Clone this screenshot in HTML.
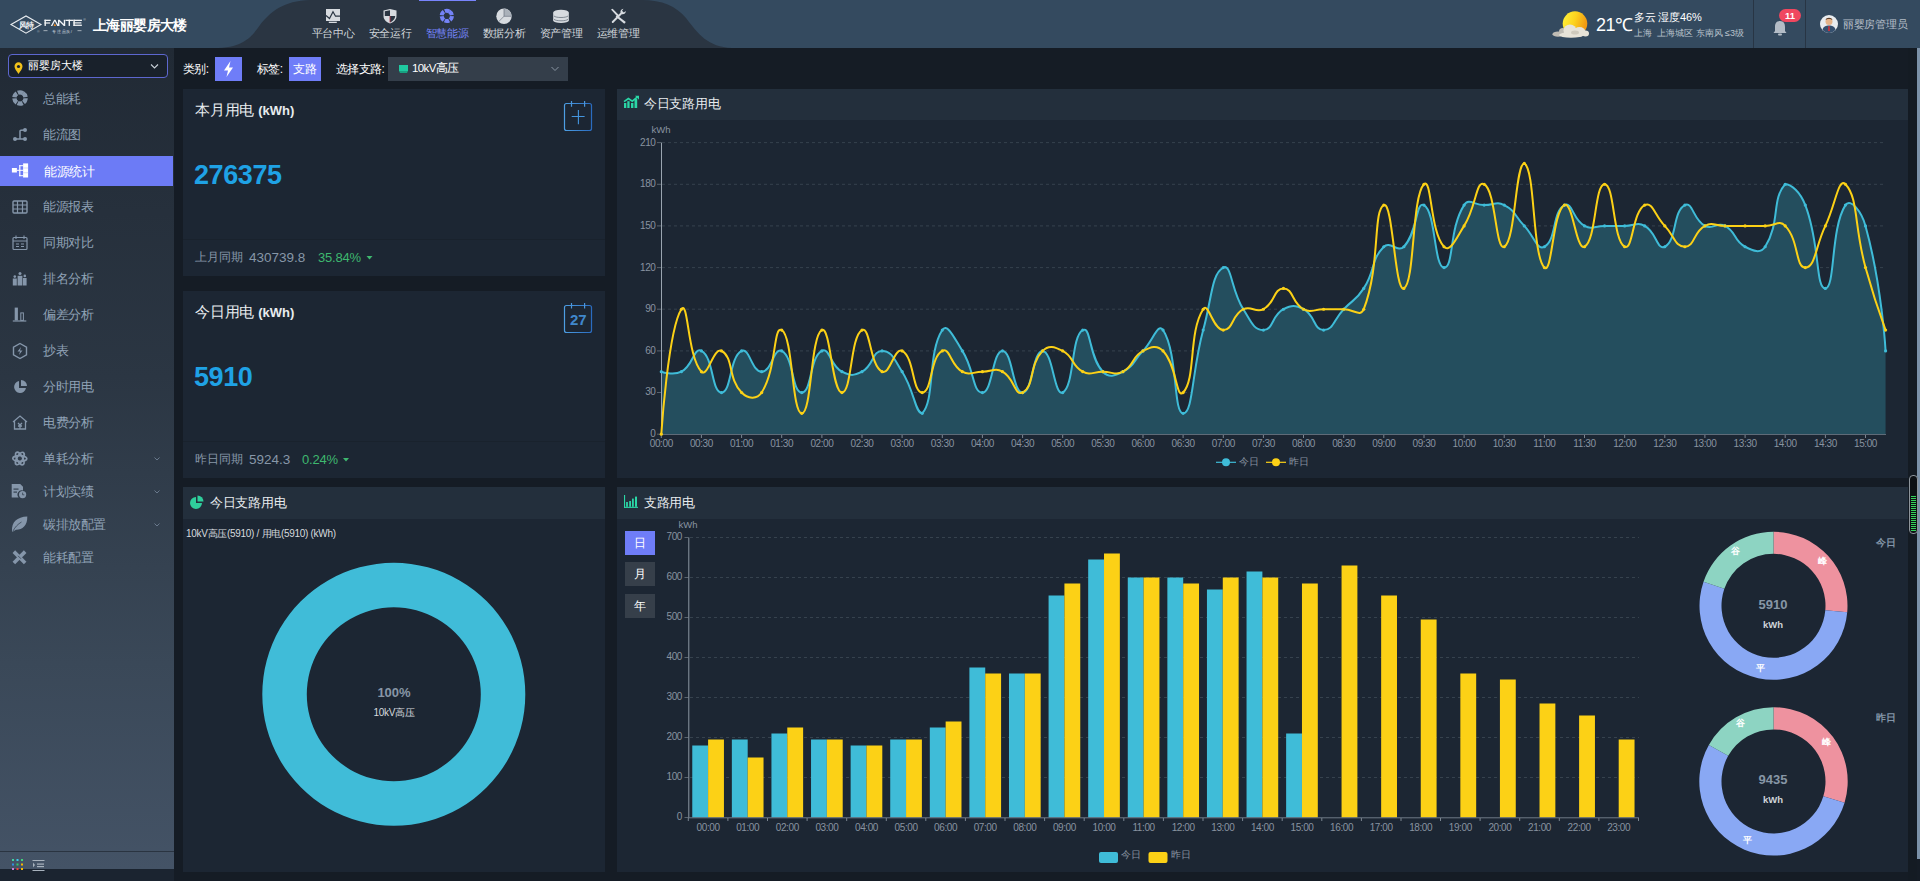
<!DOCTYPE html><html><head><meta charset="utf-8"><title>能源统计</title><style>
*{margin:0;padding:0;box-sizing:border-box}
html,body{width:1920px;height:881px;overflow:hidden;background:#151c25;font-family:"Liberation Sans",sans-serif}
.abs{position:absolute}
.t{position:absolute;white-space:nowrap;line-height:1}
svg{position:absolute;left:0;top:0;overflow:visible}
</style></head><body>
<div class="abs" style="left:0;top:0;width:1920px;height:48px;background:#344a5f"></div>
<svg width="1920" height="48" style="top:0;left:0"><path d="M214 48 C244 48 252 36 260 25 C270 12 284 0.5 310 0 L642 0 C662 0 676 6 686 18 C698 34 708 47 732 48 Z" fill="#2a3542"/></svg>
<svg width="200" height="48">
<path d="M11 24.6 L26 16 L41 24.6 L26 33.2 Z" fill="none" stroke="#e8ecf0" stroke-width="1.1"/>
<text x="26" y="28.3" font-size="7.5" fill="#eef1f4" text-anchor="middle" font-weight="bold" letter-spacing="-0.5">风特</text>
<g fill="#f2f4f6">
<rect x="44.5" y="19.7" width="1.4" height="6.2"/><rect x="44.5" y="19.7" width="6.2" height="1.3"/><rect x="44.5" y="22.4" width="5.6" height="1.2"/>
<path d="M50.8 25.9 L54.2 19.7 L55.4 19.7 L58.8 25.9 L57.3 25.9 L54.8 21.2 L52.3 25.9 Z"/>
<path d="M58 25.9 L58 19.7 L59.5 19.7 L63.8 23.9 L63.8 19.7 L65.2 19.7 L65.2 25.9 L63.8 25.9 L59.4 21.6 L59.4 25.9 Z"/>
<rect x="65.5" y="19.7" width="7.5" height="1.3"/><rect x="68.6" y="19.7" width="1.4" height="6.2"/>
<rect x="73.4" y="19.7" width="1.4" height="6.2"/><rect x="73.4" y="19.7" width="8.5" height="1.3"/><rect x="73.4" y="22.3" width="8" height="1.2"/><rect x="73.4" y="24.6" width="8.5" height="1.3"/>
</g>
<path d="M54.8 23.2 L56 25.9 L53.6 25.9 Z" fill="#f08a1c"/>
<text x="84.6" y="21" font-size="3.5" fill="#c0c8d0" text-anchor="middle">®</text>
<text x="38.4" y="33" font-size="3.5" fill="#aab4be" text-anchor="middle">®</text>
<rect x="43.5" y="30.4" width="4" height="0.7" fill="#d0d6dc"/><rect x="77.5" y="30.4" width="4" height="0.7" fill="#d0d6dc"/>
<text x="62.5" y="33" font-size="4.2" fill="#d8dde2" text-anchor="middle" letter-spacing="0.6">专注品质/</text>
</svg>
<div class="t" style="left:93px;top:18px;font-size:14px;font-weight:bold;color:#fff;letter-spacing:-0.6px">上海丽婴房大楼</div>
<div class="t" style="left:303px;top:28px;width:60px;text-align:center;font-size:11px;color:#d2d7dc;letter-spacing:-0.3px">平台中心</div>
<div class="t" style="left:360px;top:28px;width:60px;text-align:center;font-size:11px;color:#d2d7dc;letter-spacing:-0.3px">安全运行</div>
<div class="t" style="left:417px;top:28px;width:60px;text-align:center;font-size:11px;color:#7483f7;letter-spacing:-0.3px">智慧能源</div>
<div class="t" style="left:474px;top:28px;width:60px;text-align:center;font-size:11px;color:#d2d7dc;letter-spacing:-0.3px">数据分析</div>
<div class="t" style="left:531px;top:28px;width:60px;text-align:center;font-size:11px;color:#d2d7dc;letter-spacing:-0.3px">资产管理</div>
<div class="t" style="left:588px;top:28px;width:60px;text-align:center;font-size:11px;color:#d2d7dc;letter-spacing:-0.3px">运维管理</div>
<div class="abs" style="left:419px;top:0;width:57px;height:1px;background:#7884fc"></div>
<svg width="700" height="48">
<g fill="#d7dbe0">
<rect x="326" y="9" width="14" height="12"/><rect x="328.8" y="21.7" width="8" height="1.3"/>
<polyline points="326,15.5 329.5,18.5 333,11.7 335.5,16.2 340,16.2" fill="none" stroke="#2a3542" stroke-width="1.2"/>
</g>
<g>
<path d="M383.5 10.5 L390 9 L396.5 10.5 L396.5 16 C396.5 20 393 22.5 390 23.6 C387 22.5 383.5 20 383.5 16 Z" fill="#d7dbe0"/>
<path d="M384.8 11.3 L390 10.2 L390 16 L384.8 16 Z" fill="#2a3542"/><path d="M390 16 L395.2 16 C395 19.5 392.5 21.3 390 22.3 Z" fill="#2a3542"/>
<rect x="389.6" y="16" width="0.9" height="6.5" fill="#a03040"/>
</g>
<g transform="translate(446.8,15.9)"><circle r="5.1" fill="none" stroke="#7483f7" stroke-width="4" stroke-dasharray="4.4 0.94" transform="rotate(-60)"/></g>
<g>
<circle cx="504" cy="16.3" r="7.7" fill="#d7dbe0"/>
<path d="M504 16.3 L504 8.6 A7.7 7.7 0 0 1 511.7 16.3 Z" fill="#aab1ba"/>
<path d="M504 8.6 L504 16.3 L511.7 16.3 M504 16.3 L498.6 21.7" stroke="#5d6773" stroke-width="0.6" fill="none"/>
</g>
<g fill="#d7dbe0">
<ellipse cx="561" cy="12.6" rx="7.8" ry="2.8"/>
<rect x="553.2" y="12.6" width="15.6" height="8"/>
<ellipse cx="561" cy="20.4" rx="7.8" ry="2.7"/>
<path d="M554 16 C556 18 566 18 568 16 M554 19.3 C556 21.3 566 21.3 568 19.3" stroke="#6b7580" stroke-width="0.8" fill="none"/>
</g>
<g fill="#d7dbe0">
<path d="M611 9.5 L612.6 8.8 L619 15.3 L617.6 16.7 Z"/>
<path d="M617 15.2 L625.8 22 L624.3 23.8 L615.6 16.6 Z"/>
<path d="M612 21.2 L620.5 12.8 C620 11 621 9 623.5 8.8 L622 10.8 L623.8 12.4 L625.8 11 C625.8 13.5 623.6 14.8 621.8 14.2 L613.4 22.8 C612.6 23.6 611.2 22.2 612 21.2 Z"/>
</g>
</svg>
<svg width="1920" height="48">
<defs><linearGradient id="sung" x1="0" y1="0" x2="1" y2="0.3"><stop offset="0" stop-color="#fff53c"/><stop offset="0.55" stop-color="#fcd21e"/><stop offset="1" stop-color="#f29a12"/></linearGradient></defs>
<circle cx="1575" cy="23.6" r="12.3" fill="url(#sung)"/>
<g fill="#bfbcb4"><ellipse cx="1558" cy="34.2" rx="5.5" ry="2.6"/><ellipse cx="1563" cy="31.5" rx="4" ry="3.5"/></g>
<g fill="#e7e3d8"><ellipse cx="1570" cy="30.5" rx="6.5" ry="6"/><ellipse cx="1579.5" cy="32" rx="6" ry="5"/><ellipse cx="1585.5" cy="33.5" rx="3.5" ry="3"/><ellipse cx="1571" cy="35" rx="12" ry="2.8"/></g>
<ellipse cx="1575" cy="32.5" rx="4" ry="2" fill="#cfcabd"/>
<line x1="1753.5" y1="0" x2="1753.5" y2="48" stroke="#283544" stroke-width="1"/>
<line x1="1805.5" y1="0" x2="1805.5" y2="48" stroke="#283544" stroke-width="1"/>
<path d="M1780 21 C1776 21 1775 24 1775 27 L1775 31 L1773.5 33 L1786.5 33 L1785 31 L1785 27 C1785 24 1784 21 1780 21 Z" fill="#b3bcc6"/>
<rect x="1778" y="33.5" width="4" height="2" rx="1" fill="#b3bcc6"/>
<rect x="1779" y="9" width="22" height="13" rx="6.5" fill="#f0475f"/>
<text x="1790" y="18.8" font-size="9.5" font-weight="bold" fill="#fff" text-anchor="middle" font-family="Liberation Sans">11</text>
<circle cx="1829" cy="24" r="9" fill="#e9ecef"/>
<circle cx="1829" cy="21.5" r="3.5" fill="#e6b48a"/>
<path d="M1822.5 30 C1823 26.5 1826 25.5 1829 25.5 C1832 25.5 1835 26.5 1835.5 30 C1833.5 32 1831 33 1829 33 C1827 33 1824.5 32 1822.5 30 Z" fill="#36506e"/>
<path d="M1828.3 26 L1829.7 26 L1830 31 L1828 31 Z" fill="#c8303a"/>
<path d="M1825.6 20 C1826 17 1832 17 1832.4 20 C1831 18.5 1827 18.5 1825.6 20 Z" fill="#5a3d2a"/>
</svg>
<div class="t" style="left:1596px;top:16px;font-size:18px;color:#fff;letter-spacing:-0.5px">21℃</div>
<div class="t" style="left:1634px;top:12px;font-size:11px;color:#fff;letter-spacing:-0.2px">多云 湿度46%</div>
<div class="t" style="left:1634px;top:29px;font-size:9px;color:#b8c2cc;letter-spacing:0px">上海&nbsp; 上海城区 东南风 ≤3级</div>
<div class="t" style="left:1843px;top:19px;font-size:11px;color:#b4bec8;letter-spacing:-0.3px">丽婴房管理员</div>
<div class="abs" style="left:0;top:48px;width:174px;height:821px;background:linear-gradient(180deg,#212a35 0%,#2b3643 40%,#3a4858 75%,#445366 100%)"></div>
<div class="abs" style="left:0;top:851px;width:174px;height:1px;background:#2a3441"></div>
<div class="abs" style="left:0;top:869px;width:174px;height:12px;background:#1b2430"></div>
<div class="abs" style="left:8px;top:54px;width:160px;height:24px;border:1px solid #5d67cf;border-radius:4px;background:#19212b"></div>
<svg width="180" height="100">
<path d="M18.5 74 C16.5 71 14.5 68.5 14.5 66.5 C14.5 64 16.3 62.3 18.5 62.3 C20.7 62.3 22.5 64 22.5 66.5 C22.5 68.5 20.5 71 18.5 74 Z" fill="#f1c21b"/>
<circle cx="18.5" cy="66.5" r="1.6" fill="#19212b"/>
<path d="M151 64.5 L154.5 68 L158 64.5" fill="none" stroke="#c9d0d8" stroke-width="1.1"/>
</svg>
<div class="t" style="left:28px;top:60px;font-size:11px;color:#fff;letter-spacing:-0.1px">丽婴房大楼</div>
<div class="abs" style="left:0;top:156px;width:173px;height:30px;background:#6c7bf6"></div>
<div class="t" style="left:43px;top:92px;font-size:13px;color:#90a2b6;letter-spacing:-0.5px">总能耗</div>
<div class="t" style="left:43px;top:128px;font-size:13px;color:#90a2b6;letter-spacing:-0.5px">能流图</div>
<div class="t" style="left:44px;top:165px;font-size:13px;color:#ffffff;letter-spacing:-0.5px">能源统计</div>
<div class="t" style="left:43px;top:200px;font-size:13px;color:#90a2b6;letter-spacing:-0.5px">能源报表</div>
<div class="t" style="left:43px;top:236px;font-size:13px;color:#90a2b6;letter-spacing:-0.5px">同期对比</div>
<div class="t" style="left:43px;top:272px;font-size:13px;color:#90a2b6;letter-spacing:-0.5px">排名分析</div>
<div class="t" style="left:43px;top:308px;font-size:13px;color:#90a2b6;letter-spacing:-0.5px">偏差分析</div>
<div class="t" style="left:43px;top:344px;font-size:13px;color:#90a2b6;letter-spacing:-0.5px">抄表</div>
<div class="t" style="left:43px;top:380px;font-size:13px;color:#90a2b6;letter-spacing:-0.5px">分时用电</div>
<div class="t" style="left:43px;top:416px;font-size:13px;color:#90a2b6;letter-spacing:-0.5px">电费分析</div>
<div class="t" style="left:43px;top:452px;font-size:13px;color:#90a2b6;letter-spacing:-0.5px">单耗分析</div>
<div class="t" style="left:43px;top:485px;font-size:13px;color:#90a2b6;letter-spacing:-0.5px">计划实绩</div>
<div class="t" style="left:43px;top:518px;font-size:13px;color:#90a2b6;letter-spacing:-0.5px">碳排放配置</div>
<div class="t" style="left:43px;top:551px;font-size:13px;color:#90a2b6;letter-spacing:-0.5px">能耗配置</div>
<svg width="180" height="881"><path d="M154.5 457.5 L157 460.0 L159.5 457.5" fill="none" stroke="#6f8094" stroke-width="0.9"/></svg>
<svg width="180" height="881"><path d="M154.5 490.5 L157 493.0 L159.5 490.5" fill="none" stroke="#6f8094" stroke-width="0.9"/></svg>
<svg width="180" height="881"><path d="M154.5 523.5 L157 526.0 L159.5 523.5" fill="none" stroke="#6f8094" stroke-width="0.9"/></svg>
<svg width="180" height="881"><g fill="#8596aa">
<g transform="translate(20,98)"><circle r="5.6" fill="none" stroke="#8596aa" stroke-width="4.4" stroke-dasharray="4.85 1.015" transform="rotate(-60)"/></g>
<g transform="translate(20,135)"><circle cx="-5" cy="4" r="2"/><circle cx="5" cy="4" r="2"/><circle cx="5" cy="-5" r="2"/><path d="M-5 4 L5 4 M0 4 L0 -4 C0 -5 1 -5 5 -5" stroke="#8596aa" stroke-width="1.5" fill="none"/></g>
<g fill="#fff"><rect x="11.9" y="168" width="5" height="4.5"/><rect x="16.9" y="169.8" width="2.5" height="1"/><rect x="19.2" y="165.2" width="1.2" height="11"/><rect x="19.2" y="165.2" width="4" height="1"/><rect x="19.2" y="169.8" width="4" height="1"/><rect x="19.2" y="175.2" width="4" height="1"/><rect x="23.1" y="163.4" width="5" height="14.1"/><rect x="23.1" y="167.6" width="5" height="0.8" fill="#c9cdf6"/><rect x="23.1" y="172.4" width="5" height="0.8" fill="#c9cdf6"/></g>
<g transform="translate(20,207)"><rect x="-7" y="-6" width="14" height="12" rx="1" fill="none" stroke="#8596aa" stroke-width="1.4"/><path d="M-7 -2 L7 -2 M-7 2 L7 2 M-2.5 -6 L-2.5 6 M2.5 -6 L2.5 6" stroke="#8596aa" stroke-width="1.2"/></g>
<g transform="translate(20,243)"><rect x="-7" y="-5.5" width="14" height="12" rx="1" fill="none" stroke="#8596aa" stroke-width="1.2"/><path d="M-7 -2 L7 -2 M-4 -7.5 L-4 -4 M4 -7.5 L4 -4 M-4 1 L-1 1 M1 1 L4 1 M-4 3.5 L-1 3.5 M1 3.5 L4 3.5" stroke="#8596aa" stroke-width="1.1"/></g>
<g><rect x="12.8" y="278.5" width="4" height="7"/><circle cx="14.8" cy="276.6" r="1.3"/><rect x="17.6" y="275.8" width="4.8" height="9.7"/><circle cx="20" cy="273.6" r="1.5"/><rect x="23" y="278" width="3.6" height="7.5"/><circle cx="24.8" cy="275.9" r="1.3"/></g>
<g><rect x="14.7" y="307.6" width="3.2" height="12.8"/><rect x="20.8" y="312.9" width="2.6" height="7.5" fill="none" stroke="#8596aa" stroke-width="1"/><rect x="12.8" y="320.4" width="13.5" height="1.2"/></g>
<g transform="translate(20,351)"><path d="M0 -7.5 L6.5 -3.75 L6.5 3.75 L0 7.5 L-6.5 3.75 L-6.5 -3.75 Z" fill="none" stroke="#8596aa" stroke-width="1.4"/><path d="M1 -4 L-2.5 0.5 L0 0.5 L-1 4 L2.5 -0.5 L0 -0.5 Z"/></g>
<g transform="translate(20,387)"><path d="M-1 -6 A6 6 0 1 0 6 1 L-1 1 Z"/><path d="M1 -7 A6 6 0 0 1 7 -1 L1 -1 Z"/></g>
<g transform="translate(20,423)" fill="none" stroke="#8596aa" stroke-width="1.3"><path d="M-7 -1 L0 -7 L7 -1 M-5.5 -2 L-5.5 6 L5.5 6 L5.5 -2"/><path d="M-2 0 L0 2 L2 0 M0 2 L0 6 M-2 3 L2 3"/></g>
<g transform="translate(19.8,458.5)" fill="none" stroke="#8596aa" stroke-width="1.7"><ellipse rx="7" ry="2.9"/><ellipse rx="7" ry="2.9" transform="rotate(60)"/><ellipse rx="7" ry="2.9" transform="rotate(120)"/></g>
<g><path d="M11.7 484 L20.2 484 L23 486.8 L23 490.5 A4.3 4.3 0 0 0 18.6 497.5 L11.7 497.5 Z"/><rect x="13.5" y="488.5" width="5" height="1.2" fill="#34414f"/><rect x="13.5" y="491.5" width="3.5" height="1.2" fill="#34414f"/><circle cx="22.6" cy="494.6" r="3.6"/><path d="M22.6 492.6 L22.6 494.8 L24.3 494.8" stroke="#34414f" stroke-width="0.8" fill="none"/></g>
<g><path d="M12 531.5 C11.5 522 17 517 27.3 516.6 C27.5 526 22 530 16 529.8 L13 531.5 Z"/><path d="M13 531 C15 527 18 524 21.5 522" stroke="#384655" stroke-width="0.8" fill="none"/></g>
<g transform="translate(19.5,557.3)"><rect x="-8" y="-1.8" width="16" height="3.6" transform="rotate(45)"/><rect x="-8" y="-1.8" width="16" height="3.6" transform="rotate(-45)"/><path d="M-1.5 -1.5 L1.5 1.5" stroke="#394758" stroke-width="0.8"/></g>
</g></svg>
<svg width="180" height="881">
<rect x="12" y="859" width="2" height="2" fill="#3fd3a0"/><rect x="16.5" y="859" width="2" height="2" fill="#3fc8e8"/><rect x="21" y="859" width="2" height="2" fill="#3fd37a"/>
<rect x="12" y="863.5" width="2" height="2" fill="#2f8fe0"/><rect x="16.5" y="863.5" width="2" height="2" fill="#2fce6a"/><rect x="21" y="863.5" width="2" height="2" fill="#f5b800"/>
<rect x="12" y="868" width="2" height="2" fill="#c77ddb"/><rect x="16.5" y="868" width="2" height="2" fill="#f0443a"/><rect x="21" y="868" width="2" height="2" fill="#f5b800"/>
<rect x="32.5" y="860" width="12" height="1" fill="#a8b2bd"/><rect x="37" y="863.5" width="7" height="1.2" fill="#a8b2bd"/><rect x="37" y="866" width="7" height="1.2" fill="#a8b2bd"/><path d="M33 862.5 L35 865 L33 867.5 Z" fill="#a8b2bd"/><rect x="32.5" y="870" width="12" height="1" fill="#a8b2bd"/>
</svg>
<div class="t" style="left:183px;top:63px;font-size:12px;color:#fff;letter-spacing:-0.6px">类别:</div>
<div class="abs" style="left:215px;top:57px;width:27px;height:24px;background:#6f7df8"></div>
<svg width="300" height="100"><path d="M230.5 61 L224 70.5 L228 70.5 L226.5 77 L233 67.5 L229 67.5 Z" fill="#fff"/></svg>
<div class="t" style="left:257px;top:63px;font-size:12px;color:#fff;letter-spacing:-0.6px">标签:</div>
<div class="abs" style="left:289px;top:57px;width:32px;height:24px;background:#6f7df8"></div>
<div class="t" style="left:293px;top:63px;font-size:12px;color:#fff;letter-spacing:-0.5px">支路</div>
<div class="t" style="left:336px;top:63px;font-size:12px;color:#fff;letter-spacing:-0.6px">选择支路:</div>
<div class="abs" style="left:388px;top:57px;width:180px;height:24px;background:#343e4a"></div>
<svg width="600" height="100"><path d="M399 65 L408 65 L408 71 L399 71 Z" fill="#1fc9a0"/><path d="M399 71 L408 71 L407 73 L400 73 Z" fill="#18a080"/><path d="M551.5 67 L555 70.5 L558.5 67" fill="none" stroke="#8a96a3" stroke-width="1"/></svg>
<div class="t" style="left:412px;top:63px;font-size:11.5px;color:#fff;letter-spacing:-0.6px">10kV高压</div>
<div class="abs" style="left:183px;top:89px;width:422px;height:187px;background:#1c2633"></div>
<div class="abs" style="left:183px;top:291px;width:422px;height:187px;background:#1c2633"></div>
<div class="abs" style="left:183px;top:487px;width:422px;height:385px;background:#1c2633"></div>
<div class="abs" style="left:617px;top:89px;width:1291px;height:389px;background:#1c2633"></div>
<div class="abs" style="left:617px;top:487px;width:1291px;height:385px;background:#1c2633"></div>
<div class="abs" style="left:183px;top:487px;width:422px;height:32px;background:#232f3c"></div>
<div class="abs" style="left:617px;top:89px;width:1291px;height:31px;background:#232f3c"></div>
<div class="abs" style="left:617px;top:487px;width:1291px;height:32px;background:#232f3c"></div>
<div class="abs" style="left:183px;top:239px;width:422px;height:1px;background:#19222d"></div>
<div class="abs" style="left:183px;top:441px;width:422px;height:1px;background:#19222d"></div>
<div class="t" style="left:195px;top:102px;font-size:15px;color:#e8ecef;letter-spacing:-0.2px">本月用电 <b style="font-size:13px;letter-spacing:0">(kWh)</b></div>
<div class="t" style="left:194px;top:162px;font-size:27px;color:#1fa2e5;font-weight:bold;letter-spacing:-0.4px">276375</div>
<div class="t" style="left:195px;top:251px;font-size:12px;color:#8797a8;letter-spacing:-0.1px">上月同期</div>
<div class="t" style="left:249px;top:251px;font-size:13.5px;color:#8797a8;letter-spacing:0px">430739.8</div>
<div class="t" style="left:318px;top:251px;font-size:13px;color:#3eb86f;letter-spacing:-0.2px">35.84%</div>
<div class="t" style="left:195px;top:304px;font-size:15px;color:#e8ecef;letter-spacing:-0.2px">今日用电 <b style="font-size:13px;letter-spacing:0">(kWh)</b></div>
<div class="t" style="left:194px;top:364px;font-size:27px;color:#1fa2e5;font-weight:bold;letter-spacing:-0.4px">5910</div>
<div class="t" style="left:195px;top:453px;font-size:12px;color:#8797a8;letter-spacing:-0.1px">昨日同期</div>
<div class="t" style="left:249px;top:453px;font-size:13.5px;color:#8797a8;letter-spacing:0px">5924.3</div>
<div class="t" style="left:302px;top:453px;font-size:13px;color:#3eb86f;letter-spacing:-0.2px">0.24%</div>
<svg width="700" height="500">
<path d="M366.5 256 L372.5 256 L369.5 259.5 Z" fill="#3eb86f"/>
<path d="M343 458 L349 458 L346 461.5 Z" fill="#3eb86f"/>
<defs><linearGradient id="calg" x1="0" y1="0" x2="1" y2="0"><stop offset="0" stop-color="#4d9ee3"/><stop offset="1" stop-color="#2a6cc0"/></linearGradient></defs>
<rect x="564.5" y="103.5" width="27" height="27" rx="2" fill="none" stroke="url(#calg)" stroke-width="1.2"/>
<path d="M571.5 101 L571.5 106.8 M584.6 101 L584.6 106.8" stroke="#4a96dc" stroke-width="1.2"/>
<path d="M578.4 110 L578.4 124.2 M571.7 116.5 L584.6 116.5" stroke="#4496df" stroke-width="1.1"/>
<rect x="564.5" y="305.5" width="27" height="27" rx="2" fill="none" stroke="url(#calg)" stroke-width="1.2"/>
<path d="M571.5 303 L571.5 308.6 M584.6 303 L584.6 308.6" stroke="#4a96dc" stroke-width="1.2"/>
<text x="578.3" y="325" font-size="15" font-weight="bold" fill="#4088cc" text-anchor="middle" font-family="Liberation Sans">27</text>
</svg>
<div class="t" style="left:644px;top:98px;font-size:12.5px;color:#e8ecef;letter-spacing:-0.3px">今日支路用电</div>
<div class="t" style="left:210px;top:497px;font-size:12.5px;color:#e8ecef;letter-spacing:-0.3px">今日支路用电</div>
<div class="t" style="left:644px;top:497px;font-size:12.5px;color:#e8ecef;letter-spacing:-0.3px">支路用电</div>
<svg width="700" height="600">
<g fill="#2bd6a6"><rect x="624" y="103" width="2.3" height="5"/><rect x="627.3" y="101.2" width="2.3" height="6.8"/><rect x="631" y="103" width="2.4" height="5"/><rect x="634.5" y="99" width="2.7" height="9"/><polyline points="624,101.6 628.4,98.6 632.3,101.1 637.2,97.2" fill="none" stroke="#2bd6a6" stroke-width="1.7"/><path d="M635 95.8 L639 95.8 L639 99.8 Z"/></g>
<g fill="#2fcf9c"><path d="M196 497 A6 6 0 1 0 202 503 L196 503 Z"/><path d="M197.5 495.5 A6 6 0 0 1 203.5 501.5 L197.5 501.5 Z"/></g>
<g fill="#2bd6a6"><rect x="624" y="495" width="1.1" height="12.8"/><rect x="624" y="506.8" width="14" height="1.1"/><rect x="626.1" y="502" width="1.8" height="4.8"/><rect x="629.2" y="501" width="1.8" height="5.8"/><rect x="632" y="498.6" width="1.8" height="8.2"/><rect x="635" y="496.6" width="2" height="10.2"/></g>
</svg>
<svg width="1920" height="881"><line x1="662" y1="392.5" x2="1886" y2="392.5" stroke="#36424e" stroke-width="1" stroke-dasharray="3 3"/><line x1="662" y1="350.9" x2="1886" y2="350.9" stroke="#36424e" stroke-width="1" stroke-dasharray="3 3"/><line x1="662" y1="309.2" x2="1886" y2="309.2" stroke="#36424e" stroke-width="1" stroke-dasharray="3 3"/><line x1="662" y1="267.6" x2="1886" y2="267.6" stroke="#36424e" stroke-width="1" stroke-dasharray="3 3"/><line x1="662" y1="225.9" x2="1886" y2="225.9" stroke="#36424e" stroke-width="1" stroke-dasharray="3 3"/><line x1="662" y1="184.3" x2="1886" y2="184.3" stroke="#36424e" stroke-width="1" stroke-dasharray="3 3"/><line x1="662" y1="142.6" x2="1886" y2="142.6" stroke="#36424e" stroke-width="1" stroke-dasharray="3 3"/><line x1="657" y1="434.2" x2="661" y2="434.2" stroke="#59636e" stroke-width="1"/><text x="655.5" y="437.1" font-size="10" fill="#8893a0" text-anchor="end" letter-spacing="-0.4" font-family="Liberation Sans">0</text><line x1="657" y1="392.5" x2="661" y2="392.5" stroke="#59636e" stroke-width="1"/><text x="655.5" y="395.4" font-size="10" fill="#8893a0" text-anchor="end" letter-spacing="-0.4" font-family="Liberation Sans">30</text><line x1="657" y1="350.9" x2="661" y2="350.9" stroke="#59636e" stroke-width="1"/><text x="655.5" y="353.8" font-size="10" fill="#8893a0" text-anchor="end" letter-spacing="-0.4" font-family="Liberation Sans">60</text><line x1="657" y1="309.2" x2="661" y2="309.2" stroke="#59636e" stroke-width="1"/><text x="655.5" y="312.1" font-size="10" fill="#8893a0" text-anchor="end" letter-spacing="-0.4" font-family="Liberation Sans">90</text><line x1="657" y1="267.6" x2="661" y2="267.6" stroke="#59636e" stroke-width="1"/><text x="655.5" y="270.5" font-size="10" fill="#8893a0" text-anchor="end" letter-spacing="-0.4" font-family="Liberation Sans">120</text><line x1="657" y1="225.9" x2="661" y2="225.9" stroke="#59636e" stroke-width="1"/><text x="655.5" y="228.8" font-size="10" fill="#8893a0" text-anchor="end" letter-spacing="-0.4" font-family="Liberation Sans">150</text><line x1="657" y1="184.3" x2="661" y2="184.3" stroke="#59636e" stroke-width="1"/><text x="655.5" y="187.2" font-size="10" fill="#8893a0" text-anchor="end" letter-spacing="-0.4" font-family="Liberation Sans">180</text><line x1="657" y1="142.6" x2="661" y2="142.6" stroke="#59636e" stroke-width="1"/><text x="655.5" y="145.5" font-size="10" fill="#8893a0" text-anchor="end" letter-spacing="-0.4" font-family="Liberation Sans">210</text><text x="661" y="132.5" font-size="9.5" fill="#8893a0" text-anchor="middle" font-family="Liberation Sans">kWh</text><path d="M661.30 371.71 C661.30 371.71 673.15 375.98 681.37 371.71 C693.22 365.57 693.72 346.88 701.44 350.89 C713.79 357.29 711.48 392.54 721.51 392.54 C731.54 392.54 729.23 357.29 741.58 350.89 C749.30 346.88 751.62 371.71 761.65 371.71 C771.68 371.71 774.00 346.88 781.72 350.89 C794.07 357.29 791.75 392.54 801.79 392.54 C811.82 392.54 809.51 357.29 821.86 350.89 C829.58 346.88 830.08 365.57 841.93 371.71 C850.15 375.98 853.78 375.98 862.00 371.71 C873.85 365.57 872.03 350.89 882.07 350.89 C892.10 350.89 894.42 359.69 902.14 371.71 C914.49 390.93 915.18 413.37 922.21 413.37 C935.25 399.84 927.27 353.42 942.28 330.06 C947.34 322.17 954.63 338.86 962.35 350.89 C974.70 370.11 972.38 392.54 982.42 392.54 C992.45 392.54 992.46 350.89 1002.49 350.89 C1012.52 350.89 1012.52 392.54 1022.56 392.54 C1032.59 392.54 1032.59 350.89 1042.63 350.89 C1052.66 350.89 1054.40 396.85 1062.70 392.54 C1074.47 386.43 1071.00 336.17 1082.77 330.06 C1091.07 325.75 1088.84 357.19 1102.84 371.71 C1108.91 378.02 1114.69 375.98 1122.91 371.71 C1134.76 365.57 1132.94 361.30 1142.98 350.89 C1153.02 340.47 1157.99 322.17 1163.05 330.06 C1178.06 353.42 1173.08 413.37 1183.12 413.37 C1193.15 413.37 1191.82 371.34 1203.19 330.06 C1211.89 298.44 1211.49 273.68 1223.26 267.57 C1231.56 263.27 1230.98 290.01 1243.33 309.23 C1251.05 321.25 1253.37 330.06 1263.40 330.06 C1273.43 330.06 1271.62 315.38 1283.47 309.23 C1291.69 304.96 1295.32 304.96 1303.54 309.23 C1315.39 315.38 1313.58 330.06 1323.61 330.06 C1333.64 330.06 1333.64 319.64 1343.68 309.23 C1353.71 298.81 1356.03 300.42 1363.75 288.40 C1376.10 269.18 1369.82 261.27 1383.82 246.74 C1389.89 240.44 1397.82 253.05 1403.89 246.74 C1417.89 232.22 1415.66 200.78 1423.96 205.09 C1435.73 211.20 1433.99 267.57 1444.03 267.57 C1454.07 267.57 1448.73 229.01 1464.10 205.09 C1468.80 197.77 1474.13 205.09 1484.17 205.09 C1494.20 205.09 1496.02 200.82 1504.24 205.09 C1516.09 211.23 1514.27 215.50 1524.31 225.91 C1534.35 236.33 1536.66 250.75 1544.38 246.74 C1556.73 240.34 1552.10 211.49 1564.45 205.09 C1572.17 201.08 1572.67 219.77 1584.52 225.91 C1592.74 230.18 1594.55 225.91 1604.59 225.91 C1614.62 225.91 1614.62 225.91 1624.66 225.91 C1634.69 225.91 1636.51 221.65 1644.73 225.91 C1656.58 232.06 1657.08 250.75 1664.80 246.74 C1677.15 240.34 1672.52 211.49 1684.87 205.09 C1692.59 201.08 1693.09 219.77 1704.94 225.91 C1713.16 230.18 1716.79 221.65 1725.01 225.91 C1736.86 232.06 1733.23 240.59 1745.08 246.74 C1753.30 251.01 1760.45 254.06 1765.15 246.74 C1780.52 222.82 1771.29 198.71 1785.22 184.26 C1791.36 184.26 1800.23 191.95 1805.29 205.09 C1820.30 244.02 1815.32 288.40 1825.36 288.40 C1835.39 288.40 1830.42 228.44 1845.43 205.09 C1850.49 197.20 1861.77 212.35 1865.50 225.91 C1881.84 285.25 1885.57 350.89 1885.57 350.89 L1885.57 434.20 L661.30 434.20 Z" fill="#244e5e"/><line x1="661.5" y1="142.6" x2="661.5" y2="434.2" stroke="#9aa5b0" stroke-width="1"/><line x1="661" y1="434.5" x2="1886" y2="434.5" stroke="#5f6b78" stroke-width="1"/><line x1="661.3" y1="435" x2="661.3" y2="438" stroke="#7a8591" stroke-width="1"/><text x="661.3" y="447" font-size="10" letter-spacing="-0.4" fill="#8893a0" text-anchor="middle" font-family="Liberation Sans">00:00</text><line x1="701.4" y1="435" x2="701.4" y2="438" stroke="#7a8591" stroke-width="1"/><text x="701.4" y="447" font-size="10" letter-spacing="-0.4" fill="#8893a0" text-anchor="middle" font-family="Liberation Sans">00:30</text><line x1="741.6" y1="435" x2="741.6" y2="438" stroke="#7a8591" stroke-width="1"/><text x="741.6" y="447" font-size="10" letter-spacing="-0.4" fill="#8893a0" text-anchor="middle" font-family="Liberation Sans">01:00</text><line x1="781.7" y1="435" x2="781.7" y2="438" stroke="#7a8591" stroke-width="1"/><text x="781.7" y="447" font-size="10" letter-spacing="-0.4" fill="#8893a0" text-anchor="middle" font-family="Liberation Sans">01:30</text><line x1="821.9" y1="435" x2="821.9" y2="438" stroke="#7a8591" stroke-width="1"/><text x="821.9" y="447" font-size="10" letter-spacing="-0.4" fill="#8893a0" text-anchor="middle" font-family="Liberation Sans">02:00</text><line x1="862.0" y1="435" x2="862.0" y2="438" stroke="#7a8591" stroke-width="1"/><text x="862.0" y="447" font-size="10" letter-spacing="-0.4" fill="#8893a0" text-anchor="middle" font-family="Liberation Sans">02:30</text><line x1="902.1" y1="435" x2="902.1" y2="438" stroke="#7a8591" stroke-width="1"/><text x="902.1" y="447" font-size="10" letter-spacing="-0.4" fill="#8893a0" text-anchor="middle" font-family="Liberation Sans">03:00</text><line x1="942.3" y1="435" x2="942.3" y2="438" stroke="#7a8591" stroke-width="1"/><text x="942.3" y="447" font-size="10" letter-spacing="-0.4" fill="#8893a0" text-anchor="middle" font-family="Liberation Sans">03:30</text><line x1="982.4" y1="435" x2="982.4" y2="438" stroke="#7a8591" stroke-width="1"/><text x="982.4" y="447" font-size="10" letter-spacing="-0.4" fill="#8893a0" text-anchor="middle" font-family="Liberation Sans">04:00</text><line x1="1022.6" y1="435" x2="1022.6" y2="438" stroke="#7a8591" stroke-width="1"/><text x="1022.6" y="447" font-size="10" letter-spacing="-0.4" fill="#8893a0" text-anchor="middle" font-family="Liberation Sans">04:30</text><line x1="1062.7" y1="435" x2="1062.7" y2="438" stroke="#7a8591" stroke-width="1"/><text x="1062.7" y="447" font-size="10" letter-spacing="-0.4" fill="#8893a0" text-anchor="middle" font-family="Liberation Sans">05:00</text><line x1="1102.8" y1="435" x2="1102.8" y2="438" stroke="#7a8591" stroke-width="1"/><text x="1102.8" y="447" font-size="10" letter-spacing="-0.4" fill="#8893a0" text-anchor="middle" font-family="Liberation Sans">05:30</text><line x1="1143.0" y1="435" x2="1143.0" y2="438" stroke="#7a8591" stroke-width="1"/><text x="1143.0" y="447" font-size="10" letter-spacing="-0.4" fill="#8893a0" text-anchor="middle" font-family="Liberation Sans">06:00</text><line x1="1183.1" y1="435" x2="1183.1" y2="438" stroke="#7a8591" stroke-width="1"/><text x="1183.1" y="447" font-size="10" letter-spacing="-0.4" fill="#8893a0" text-anchor="middle" font-family="Liberation Sans">06:30</text><line x1="1223.3" y1="435" x2="1223.3" y2="438" stroke="#7a8591" stroke-width="1"/><text x="1223.3" y="447" font-size="10" letter-spacing="-0.4" fill="#8893a0" text-anchor="middle" font-family="Liberation Sans">07:00</text><line x1="1263.4" y1="435" x2="1263.4" y2="438" stroke="#7a8591" stroke-width="1"/><text x="1263.4" y="447" font-size="10" letter-spacing="-0.4" fill="#8893a0" text-anchor="middle" font-family="Liberation Sans">07:30</text><line x1="1303.5" y1="435" x2="1303.5" y2="438" stroke="#7a8591" stroke-width="1"/><text x="1303.5" y="447" font-size="10" letter-spacing="-0.4" fill="#8893a0" text-anchor="middle" font-family="Liberation Sans">08:00</text><line x1="1343.7" y1="435" x2="1343.7" y2="438" stroke="#7a8591" stroke-width="1"/><text x="1343.7" y="447" font-size="10" letter-spacing="-0.4" fill="#8893a0" text-anchor="middle" font-family="Liberation Sans">08:30</text><line x1="1383.8" y1="435" x2="1383.8" y2="438" stroke="#7a8591" stroke-width="1"/><text x="1383.8" y="447" font-size="10" letter-spacing="-0.4" fill="#8893a0" text-anchor="middle" font-family="Liberation Sans">09:00</text><line x1="1424.0" y1="435" x2="1424.0" y2="438" stroke="#7a8591" stroke-width="1"/><text x="1424.0" y="447" font-size="10" letter-spacing="-0.4" fill="#8893a0" text-anchor="middle" font-family="Liberation Sans">09:30</text><line x1="1464.1" y1="435" x2="1464.1" y2="438" stroke="#7a8591" stroke-width="1"/><text x="1464.1" y="447" font-size="10" letter-spacing="-0.4" fill="#8893a0" text-anchor="middle" font-family="Liberation Sans">10:00</text><line x1="1504.2" y1="435" x2="1504.2" y2="438" stroke="#7a8591" stroke-width="1"/><text x="1504.2" y="447" font-size="10" letter-spacing="-0.4" fill="#8893a0" text-anchor="middle" font-family="Liberation Sans">10:30</text><line x1="1544.4" y1="435" x2="1544.4" y2="438" stroke="#7a8591" stroke-width="1"/><text x="1544.4" y="447" font-size="10" letter-spacing="-0.4" fill="#8893a0" text-anchor="middle" font-family="Liberation Sans">11:00</text><line x1="1584.5" y1="435" x2="1584.5" y2="438" stroke="#7a8591" stroke-width="1"/><text x="1584.5" y="447" font-size="10" letter-spacing="-0.4" fill="#8893a0" text-anchor="middle" font-family="Liberation Sans">11:30</text><line x1="1624.7" y1="435" x2="1624.7" y2="438" stroke="#7a8591" stroke-width="1"/><text x="1624.7" y="447" font-size="10" letter-spacing="-0.4" fill="#8893a0" text-anchor="middle" font-family="Liberation Sans">12:00</text><line x1="1664.8" y1="435" x2="1664.8" y2="438" stroke="#7a8591" stroke-width="1"/><text x="1664.8" y="447" font-size="10" letter-spacing="-0.4" fill="#8893a0" text-anchor="middle" font-family="Liberation Sans">12:30</text><line x1="1704.9" y1="435" x2="1704.9" y2="438" stroke="#7a8591" stroke-width="1"/><text x="1704.9" y="447" font-size="10" letter-spacing="-0.4" fill="#8893a0" text-anchor="middle" font-family="Liberation Sans">13:00</text><line x1="1745.1" y1="435" x2="1745.1" y2="438" stroke="#7a8591" stroke-width="1"/><text x="1745.1" y="447" font-size="10" letter-spacing="-0.4" fill="#8893a0" text-anchor="middle" font-family="Liberation Sans">13:30</text><line x1="1785.2" y1="435" x2="1785.2" y2="438" stroke="#7a8591" stroke-width="1"/><text x="1785.2" y="447" font-size="10" letter-spacing="-0.4" fill="#8893a0" text-anchor="middle" font-family="Liberation Sans">14:00</text><line x1="1825.4" y1="435" x2="1825.4" y2="438" stroke="#7a8591" stroke-width="1"/><text x="1825.4" y="447" font-size="10" letter-spacing="-0.4" fill="#8893a0" text-anchor="middle" font-family="Liberation Sans">14:30</text><line x1="1865.5" y1="435" x2="1865.5" y2="438" stroke="#7a8591" stroke-width="1"/><text x="1865.5" y="447" font-size="10" letter-spacing="-0.4" fill="#8893a0" text-anchor="middle" font-family="Liberation Sans">15:00</text><path d="M661.30 371.71 C661.30 371.71 673.15 375.98 681.37 371.71 C693.22 365.57 693.72 346.88 701.44 350.89 C713.79 357.29 711.48 392.54 721.51 392.54 C731.54 392.54 729.23 357.29 741.58 350.89 C749.30 346.88 751.62 371.71 761.65 371.71 C771.68 371.71 774.00 346.88 781.72 350.89 C794.07 357.29 791.75 392.54 801.79 392.54 C811.82 392.54 809.51 357.29 821.86 350.89 C829.58 346.88 830.08 365.57 841.93 371.71 C850.15 375.98 853.78 375.98 862.00 371.71 C873.85 365.57 872.03 350.89 882.07 350.89 C892.10 350.89 894.42 359.69 902.14 371.71 C914.49 390.93 915.18 413.37 922.21 413.37 C935.25 399.84 927.27 353.42 942.28 330.06 C947.34 322.17 954.63 338.86 962.35 350.89 C974.70 370.11 972.38 392.54 982.42 392.54 C992.45 392.54 992.46 350.89 1002.49 350.89 C1012.52 350.89 1012.52 392.54 1022.56 392.54 C1032.59 392.54 1032.59 350.89 1042.63 350.89 C1052.66 350.89 1054.40 396.85 1062.70 392.54 C1074.47 386.43 1071.00 336.17 1082.77 330.06 C1091.07 325.75 1088.84 357.19 1102.84 371.71 C1108.91 378.02 1114.69 375.98 1122.91 371.71 C1134.76 365.57 1132.94 361.30 1142.98 350.89 C1153.02 340.47 1157.99 322.17 1163.05 330.06 C1178.06 353.42 1173.08 413.37 1183.12 413.37 C1193.15 413.37 1191.82 371.34 1203.19 330.06 C1211.89 298.44 1211.49 273.68 1223.26 267.57 C1231.56 263.27 1230.98 290.01 1243.33 309.23 C1251.05 321.25 1253.37 330.06 1263.40 330.06 C1273.43 330.06 1271.62 315.38 1283.47 309.23 C1291.69 304.96 1295.32 304.96 1303.54 309.23 C1315.39 315.38 1313.58 330.06 1323.61 330.06 C1333.64 330.06 1333.64 319.64 1343.68 309.23 C1353.71 298.81 1356.03 300.42 1363.75 288.40 C1376.10 269.18 1369.82 261.27 1383.82 246.74 C1389.89 240.44 1397.82 253.05 1403.89 246.74 C1417.89 232.22 1415.66 200.78 1423.96 205.09 C1435.73 211.20 1433.99 267.57 1444.03 267.57 C1454.07 267.57 1448.73 229.01 1464.10 205.09 C1468.80 197.77 1474.13 205.09 1484.17 205.09 C1494.20 205.09 1496.02 200.82 1504.24 205.09 C1516.09 211.23 1514.27 215.50 1524.31 225.91 C1534.35 236.33 1536.66 250.75 1544.38 246.74 C1556.73 240.34 1552.10 211.49 1564.45 205.09 C1572.17 201.08 1572.67 219.77 1584.52 225.91 C1592.74 230.18 1594.55 225.91 1604.59 225.91 C1614.62 225.91 1614.62 225.91 1624.66 225.91 C1634.69 225.91 1636.51 221.65 1644.73 225.91 C1656.58 232.06 1657.08 250.75 1664.80 246.74 C1677.15 240.34 1672.52 211.49 1684.87 205.09 C1692.59 201.08 1693.09 219.77 1704.94 225.91 C1713.16 230.18 1716.79 221.65 1725.01 225.91 C1736.86 232.06 1733.23 240.59 1745.08 246.74 C1753.30 251.01 1760.45 254.06 1765.15 246.74 C1780.52 222.82 1771.29 198.71 1785.22 184.26 C1791.36 184.26 1800.23 191.95 1805.29 205.09 C1820.30 244.02 1815.32 288.40 1825.36 288.40 C1835.39 288.40 1830.42 228.44 1845.43 205.09 C1850.49 197.20 1861.77 212.35 1865.50 225.91 C1881.84 285.25 1885.57 350.89 1885.57 350.89" fill="none" stroke="#3fbcd8" stroke-width="2"/><path d="M661.30 434.20 C661.30 434.20 668.15 329.80 681.37 309.23 C688.22 298.56 687.51 357.26 701.44 371.71 C707.58 378.09 713.79 346.88 721.51 350.89 C733.86 357.29 727.58 378.02 741.58 392.54 C747.65 398.85 756.95 399.86 761.65 392.54 C777.02 368.62 773.02 325.54 781.72 330.06 C793.09 335.95 791.75 413.37 801.79 413.37 C811.82 413.37 810.49 335.95 821.86 330.06 C830.56 325.54 831.89 392.54 841.93 392.54 C851.96 392.54 850.23 336.17 862.00 330.06 C870.30 325.75 869.72 365.31 882.07 371.71 C889.79 375.72 894.42 346.88 902.14 350.89 C914.49 357.29 912.18 392.54 922.21 392.54 C932.25 392.54 929.93 357.29 942.28 350.89 C950.00 346.88 950.50 365.57 962.35 371.71 C970.57 375.98 972.38 371.71 982.42 371.71 C992.45 371.71 994.27 367.45 1002.49 371.71 C1014.34 377.86 1014.84 396.55 1022.56 392.54 C1034.91 386.14 1028.63 365.41 1042.63 350.89 C1048.70 344.58 1054.48 346.62 1062.70 350.89 C1074.55 357.03 1070.92 365.57 1082.77 371.71 C1090.99 375.98 1092.80 371.71 1102.84 371.71 C1112.88 371.71 1114.69 375.98 1122.91 371.71 C1134.76 365.57 1131.13 357.03 1142.98 350.89 C1151.20 346.62 1156.98 344.58 1163.05 350.89 C1177.05 365.41 1176.09 399.84 1183.12 392.54 C1196.16 379.01 1188.18 332.59 1203.19 309.23 C1208.25 301.34 1213.22 330.06 1223.26 330.06 C1233.30 330.06 1231.48 315.38 1243.33 309.23 C1251.55 304.96 1255.18 313.49 1263.40 309.23 C1275.25 303.08 1273.43 288.40 1283.47 288.40 C1293.50 288.40 1291.69 303.08 1303.54 309.23 C1311.76 313.49 1313.58 309.23 1323.61 309.23 C1333.64 309.23 1333.64 309.23 1343.68 309.23 C1353.71 309.23 1360.56 317.51 1363.75 309.23 C1380.63 265.44 1372.72 210.85 1383.82 205.09 C1392.79 200.43 1394.92 293.05 1403.89 288.40 C1414.99 282.64 1411.56 197.12 1423.96 184.26 C1431.63 176.30 1430.10 232.29 1444.03 246.74 C1450.17 253.11 1456.38 237.94 1464.10 225.91 C1476.45 206.69 1475.87 179.95 1484.17 184.26 C1495.94 190.37 1495.54 251.26 1504.24 246.74 C1515.61 240.85 1515.34 163.43 1524.31 163.43 C1535.41 169.19 1531.98 254.70 1544.38 267.57 C1552.05 275.53 1552.68 211.20 1564.45 205.09 C1572.75 200.78 1576.22 251.05 1584.52 246.74 C1596.29 240.63 1594.55 184.26 1604.59 184.26 C1614.62 184.26 1612.89 240.63 1624.66 246.74 C1632.96 251.05 1632.38 211.49 1644.73 205.09 C1652.45 201.08 1654.76 215.50 1664.80 225.91 C1674.83 236.33 1674.83 246.74 1684.87 246.74 C1694.90 246.74 1693.09 232.06 1704.94 225.91 C1713.16 221.65 1714.97 225.91 1725.01 225.91 C1735.05 225.91 1735.05 225.91 1745.08 225.91 C1755.11 225.91 1755.12 225.91 1765.15 225.91 C1775.18 225.91 1779.15 219.61 1785.22 225.91 C1799.22 240.44 1795.26 267.57 1805.29 267.57 C1815.32 267.57 1815.32 246.74 1825.36 225.91 C1835.39 205.09 1838.40 176.96 1845.43 184.26 C1858.47 197.79 1854.13 226.29 1865.50 267.57 C1874.20 299.19 1885.57 330.06 1885.57 330.06" fill="none" stroke="#fcd116" stroke-width="2"/><circle cx="661.30" cy="371.71" r="1.6" fill="#3fbcd8"/><circle cx="681.37" cy="371.71" r="1.6" fill="#3fbcd8"/><circle cx="701.44" cy="350.89" r="1.6" fill="#3fbcd8"/><circle cx="721.51" cy="392.54" r="1.6" fill="#3fbcd8"/><circle cx="741.58" cy="350.89" r="1.6" fill="#3fbcd8"/><circle cx="761.65" cy="371.71" r="1.6" fill="#3fbcd8"/><circle cx="781.72" cy="350.89" r="1.6" fill="#3fbcd8"/><circle cx="801.79" cy="392.54" r="1.6" fill="#3fbcd8"/><circle cx="821.86" cy="350.89" r="1.6" fill="#3fbcd8"/><circle cx="841.93" cy="371.71" r="1.6" fill="#3fbcd8"/><circle cx="862.00" cy="371.71" r="1.6" fill="#3fbcd8"/><circle cx="882.07" cy="350.89" r="1.6" fill="#3fbcd8"/><circle cx="902.14" cy="371.71" r="1.6" fill="#3fbcd8"/><circle cx="922.21" cy="413.37" r="1.6" fill="#3fbcd8"/><circle cx="942.28" cy="330.06" r="1.6" fill="#3fbcd8"/><circle cx="962.35" cy="350.89" r="1.6" fill="#3fbcd8"/><circle cx="982.42" cy="392.54" r="1.6" fill="#3fbcd8"/><circle cx="1002.49" cy="350.89" r="1.6" fill="#3fbcd8"/><circle cx="1022.56" cy="392.54" r="1.6" fill="#3fbcd8"/><circle cx="1042.63" cy="350.89" r="1.6" fill="#3fbcd8"/><circle cx="1062.70" cy="392.54" r="1.6" fill="#3fbcd8"/><circle cx="1082.77" cy="330.06" r="1.6" fill="#3fbcd8"/><circle cx="1102.84" cy="371.71" r="1.6" fill="#3fbcd8"/><circle cx="1122.91" cy="371.71" r="1.6" fill="#3fbcd8"/><circle cx="1142.98" cy="350.89" r="1.6" fill="#3fbcd8"/><circle cx="1163.05" cy="330.06" r="1.6" fill="#3fbcd8"/><circle cx="1183.12" cy="413.37" r="1.6" fill="#3fbcd8"/><circle cx="1203.19" cy="330.06" r="1.6" fill="#3fbcd8"/><circle cx="1223.26" cy="267.57" r="1.6" fill="#3fbcd8"/><circle cx="1243.33" cy="309.23" r="1.6" fill="#3fbcd8"/><circle cx="1263.40" cy="330.06" r="1.6" fill="#3fbcd8"/><circle cx="1283.47" cy="309.23" r="1.6" fill="#3fbcd8"/><circle cx="1303.54" cy="309.23" r="1.6" fill="#3fbcd8"/><circle cx="1323.61" cy="330.06" r="1.6" fill="#3fbcd8"/><circle cx="1343.68" cy="309.23" r="1.6" fill="#3fbcd8"/><circle cx="1363.75" cy="288.40" r="1.6" fill="#3fbcd8"/><circle cx="1383.82" cy="246.74" r="1.6" fill="#3fbcd8"/><circle cx="1403.89" cy="246.74" r="1.6" fill="#3fbcd8"/><circle cx="1423.96" cy="205.09" r="1.6" fill="#3fbcd8"/><circle cx="1444.03" cy="267.57" r="1.6" fill="#3fbcd8"/><circle cx="1464.10" cy="205.09" r="1.6" fill="#3fbcd8"/><circle cx="1484.17" cy="205.09" r="1.6" fill="#3fbcd8"/><circle cx="1504.24" cy="205.09" r="1.6" fill="#3fbcd8"/><circle cx="1524.31" cy="225.91" r="1.6" fill="#3fbcd8"/><circle cx="1544.38" cy="246.74" r="1.6" fill="#3fbcd8"/><circle cx="1564.45" cy="205.09" r="1.6" fill="#3fbcd8"/><circle cx="1584.52" cy="225.91" r="1.6" fill="#3fbcd8"/><circle cx="1604.59" cy="225.91" r="1.6" fill="#3fbcd8"/><circle cx="1624.66" cy="225.91" r="1.6" fill="#3fbcd8"/><circle cx="1644.73" cy="225.91" r="1.6" fill="#3fbcd8"/><circle cx="1664.80" cy="246.74" r="1.6" fill="#3fbcd8"/><circle cx="1684.87" cy="205.09" r="1.6" fill="#3fbcd8"/><circle cx="1704.94" cy="225.91" r="1.6" fill="#3fbcd8"/><circle cx="1725.01" cy="225.91" r="1.6" fill="#3fbcd8"/><circle cx="1745.08" cy="246.74" r="1.6" fill="#3fbcd8"/><circle cx="1765.15" cy="246.74" r="1.6" fill="#3fbcd8"/><circle cx="1785.22" cy="184.26" r="1.6" fill="#3fbcd8"/><circle cx="1805.29" cy="205.09" r="1.6" fill="#3fbcd8"/><circle cx="1825.36" cy="288.40" r="1.6" fill="#3fbcd8"/><circle cx="1845.43" cy="205.09" r="1.6" fill="#3fbcd8"/><circle cx="1865.50" cy="225.91" r="1.6" fill="#3fbcd8"/><circle cx="1885.57" cy="350.89" r="1.6" fill="#3fbcd8"/><circle cx="661.30" cy="434.20" r="1.6" fill="#fcd116"/><circle cx="681.37" cy="309.23" r="1.6" fill="#fcd116"/><circle cx="701.44" cy="371.71" r="1.6" fill="#fcd116"/><circle cx="721.51" cy="350.89" r="1.6" fill="#fcd116"/><circle cx="741.58" cy="392.54" r="1.6" fill="#fcd116"/><circle cx="761.65" cy="392.54" r="1.6" fill="#fcd116"/><circle cx="781.72" cy="330.06" r="1.6" fill="#fcd116"/><circle cx="801.79" cy="413.37" r="1.6" fill="#fcd116"/><circle cx="821.86" cy="330.06" r="1.6" fill="#fcd116"/><circle cx="841.93" cy="392.54" r="1.6" fill="#fcd116"/><circle cx="862.00" cy="330.06" r="1.6" fill="#fcd116"/><circle cx="882.07" cy="371.71" r="1.6" fill="#fcd116"/><circle cx="902.14" cy="350.89" r="1.6" fill="#fcd116"/><circle cx="922.21" cy="392.54" r="1.6" fill="#fcd116"/><circle cx="942.28" cy="350.89" r="1.6" fill="#fcd116"/><circle cx="962.35" cy="371.71" r="1.6" fill="#fcd116"/><circle cx="982.42" cy="371.71" r="1.6" fill="#fcd116"/><circle cx="1002.49" cy="371.71" r="1.6" fill="#fcd116"/><circle cx="1022.56" cy="392.54" r="1.6" fill="#fcd116"/><circle cx="1042.63" cy="350.89" r="1.6" fill="#fcd116"/><circle cx="1062.70" cy="350.89" r="1.6" fill="#fcd116"/><circle cx="1082.77" cy="371.71" r="1.6" fill="#fcd116"/><circle cx="1102.84" cy="371.71" r="1.6" fill="#fcd116"/><circle cx="1122.91" cy="371.71" r="1.6" fill="#fcd116"/><circle cx="1142.98" cy="350.89" r="1.6" fill="#fcd116"/><circle cx="1163.05" cy="350.89" r="1.6" fill="#fcd116"/><circle cx="1183.12" cy="392.54" r="1.6" fill="#fcd116"/><circle cx="1203.19" cy="309.23" r="1.6" fill="#fcd116"/><circle cx="1223.26" cy="330.06" r="1.6" fill="#fcd116"/><circle cx="1243.33" cy="309.23" r="1.6" fill="#fcd116"/><circle cx="1263.40" cy="309.23" r="1.6" fill="#fcd116"/><circle cx="1283.47" cy="288.40" r="1.6" fill="#fcd116"/><circle cx="1303.54" cy="309.23" r="1.6" fill="#fcd116"/><circle cx="1323.61" cy="309.23" r="1.6" fill="#fcd116"/><circle cx="1343.68" cy="309.23" r="1.6" fill="#fcd116"/><circle cx="1363.75" cy="309.23" r="1.6" fill="#fcd116"/><circle cx="1383.82" cy="205.09" r="1.6" fill="#fcd116"/><circle cx="1403.89" cy="288.40" r="1.6" fill="#fcd116"/><circle cx="1423.96" cy="184.26" r="1.6" fill="#fcd116"/><circle cx="1444.03" cy="246.74" r="1.6" fill="#fcd116"/><circle cx="1464.10" cy="225.91" r="1.6" fill="#fcd116"/><circle cx="1484.17" cy="184.26" r="1.6" fill="#fcd116"/><circle cx="1504.24" cy="246.74" r="1.6" fill="#fcd116"/><circle cx="1524.31" cy="163.43" r="1.6" fill="#fcd116"/><circle cx="1544.38" cy="267.57" r="1.6" fill="#fcd116"/><circle cx="1564.45" cy="205.09" r="1.6" fill="#fcd116"/><circle cx="1584.52" cy="246.74" r="1.6" fill="#fcd116"/><circle cx="1604.59" cy="184.26" r="1.6" fill="#fcd116"/><circle cx="1624.66" cy="246.74" r="1.6" fill="#fcd116"/><circle cx="1644.73" cy="205.09" r="1.6" fill="#fcd116"/><circle cx="1664.80" cy="225.91" r="1.6" fill="#fcd116"/><circle cx="1684.87" cy="246.74" r="1.6" fill="#fcd116"/><circle cx="1704.94" cy="225.91" r="1.6" fill="#fcd116"/><circle cx="1725.01" cy="225.91" r="1.6" fill="#fcd116"/><circle cx="1745.08" cy="225.91" r="1.6" fill="#fcd116"/><circle cx="1765.15" cy="225.91" r="1.6" fill="#fcd116"/><circle cx="1785.22" cy="225.91" r="1.6" fill="#fcd116"/><circle cx="1805.29" cy="267.57" r="1.6" fill="#fcd116"/><circle cx="1825.36" cy="225.91" r="1.6" fill="#fcd116"/><circle cx="1845.43" cy="184.26" r="1.6" fill="#fcd116"/><circle cx="1865.50" cy="267.57" r="1.6" fill="#fcd116"/><circle cx="1885.57" cy="330.06" r="1.6" fill="#fcd116"/><line x1="1216" y1="462.3" x2="1236" y2="462.3" stroke="#3fbcd8" stroke-width="1.2"/><circle cx="1226" cy="462.3" r="4" fill="#3fbcd8"/><line x1="1266" y1="462.3" x2="1286" y2="462.3" stroke="#fcd116" stroke-width="1.2"/><circle cx="1276" cy="462.3" r="4" fill="#fcd116"/></svg>
<div class="t" style="left:1239px;top:457px;font-size:10px;color:#8893a0">今日</div>
<div class="t" style="left:1289px;top:457px;font-size:10px;color:#8893a0">昨日</div>
<svg width="1920" height="881"><line x1="690" y1="777.5" x2="1639" y2="777.5" stroke="#36424e" stroke-width="1" stroke-dasharray="3 3"/><line x1="690" y1="737.5" x2="1639" y2="737.5" stroke="#36424e" stroke-width="1" stroke-dasharray="3 3"/><line x1="690" y1="697.5" x2="1639" y2="697.5" stroke="#36424e" stroke-width="1" stroke-dasharray="3 3"/><line x1="690" y1="657.5" x2="1639" y2="657.5" stroke="#36424e" stroke-width="1" stroke-dasharray="3 3"/><line x1="690" y1="617.5" x2="1639" y2="617.5" stroke="#36424e" stroke-width="1" stroke-dasharray="3 3"/><line x1="690" y1="577.5" x2="1639" y2="577.5" stroke="#36424e" stroke-width="1" stroke-dasharray="3 3"/><line x1="690" y1="537.5" x2="1639" y2="537.5" stroke="#36424e" stroke-width="1" stroke-dasharray="3 3"/><line x1="684.5" y1="817.5" x2="688.5" y2="817.5" stroke="#59636e" stroke-width="1"/><text x="682" y="819.8" font-size="10" fill="#8893a0" text-anchor="end" letter-spacing="-0.4" font-family="Liberation Sans">0</text><line x1="684.5" y1="777.5" x2="688.5" y2="777.5" stroke="#59636e" stroke-width="1"/><text x="682" y="779.8" font-size="10" fill="#8893a0" text-anchor="end" letter-spacing="-0.4" font-family="Liberation Sans">100</text><line x1="684.5" y1="737.5" x2="688.5" y2="737.5" stroke="#59636e" stroke-width="1"/><text x="682" y="739.8" font-size="10" fill="#8893a0" text-anchor="end" letter-spacing="-0.4" font-family="Liberation Sans">200</text><line x1="684.5" y1="697.5" x2="688.5" y2="697.5" stroke="#59636e" stroke-width="1"/><text x="682" y="699.8" font-size="10" fill="#8893a0" text-anchor="end" letter-spacing="-0.4" font-family="Liberation Sans">300</text><line x1="684.5" y1="657.5" x2="688.5" y2="657.5" stroke="#59636e" stroke-width="1"/><text x="682" y="659.8" font-size="10" fill="#8893a0" text-anchor="end" letter-spacing="-0.4" font-family="Liberation Sans">400</text><line x1="684.5" y1="617.5" x2="688.5" y2="617.5" stroke="#59636e" stroke-width="1"/><text x="682" y="619.8" font-size="10" fill="#8893a0" text-anchor="end" letter-spacing="-0.4" font-family="Liberation Sans">500</text><line x1="684.5" y1="577.5" x2="688.5" y2="577.5" stroke="#59636e" stroke-width="1"/><text x="682" y="579.8" font-size="10" fill="#8893a0" text-anchor="end" letter-spacing="-0.4" font-family="Liberation Sans">600</text><line x1="684.5" y1="537.5" x2="688.5" y2="537.5" stroke="#59636e" stroke-width="1"/><text x="682" y="539.8" font-size="10" fill="#8893a0" text-anchor="end" letter-spacing="-0.4" font-family="Liberation Sans">700</text><text x="688" y="527.5" font-size="9.5" fill="#8893a0" text-anchor="middle" font-family="Liberation Sans">kWh</text><rect x="692.26" y="745.50" width="15.84" height="72.00" fill="#3fbcd8"/><rect x="708.10" y="739.50" width="15.84" height="78.00" fill="#fcd116"/><text x="708.1" y="830.5" font-size="10" letter-spacing="-0.4" fill="#8893a0" text-anchor="middle" font-family="Liberation Sans">00:00</text><rect x="731.85" y="739.50" width="15.84" height="78.00" fill="#3fbcd8"/><rect x="747.69" y="757.50" width="15.84" height="60.00" fill="#fcd116"/><text x="747.7" y="830.5" font-size="10" letter-spacing="-0.4" fill="#8893a0" text-anchor="middle" font-family="Liberation Sans">01:00</text><rect x="771.44" y="733.50" width="15.84" height="84.00" fill="#3fbcd8"/><rect x="787.28" y="727.50" width="15.84" height="90.00" fill="#fcd116"/><text x="787.3" y="830.5" font-size="10" letter-spacing="-0.4" fill="#8893a0" text-anchor="middle" font-family="Liberation Sans">02:00</text><rect x="811.03" y="739.50" width="15.84" height="78.00" fill="#3fbcd8"/><rect x="826.87" y="739.50" width="15.84" height="78.00" fill="#fcd116"/><text x="826.9" y="830.5" font-size="10" letter-spacing="-0.4" fill="#8893a0" text-anchor="middle" font-family="Liberation Sans">03:00</text><rect x="850.63" y="745.50" width="15.84" height="72.00" fill="#3fbcd8"/><rect x="866.46" y="745.50" width="15.84" height="72.00" fill="#fcd116"/><text x="866.5" y="830.5" font-size="10" letter-spacing="-0.4" fill="#8893a0" text-anchor="middle" font-family="Liberation Sans">04:00</text><rect x="890.22" y="739.50" width="15.84" height="78.00" fill="#3fbcd8"/><rect x="906.05" y="739.50" width="15.84" height="78.00" fill="#fcd116"/><text x="906.1" y="830.5" font-size="10" letter-spacing="-0.4" fill="#8893a0" text-anchor="middle" font-family="Liberation Sans">05:00</text><rect x="929.81" y="727.50" width="15.84" height="90.00" fill="#3fbcd8"/><rect x="945.65" y="721.50" width="15.84" height="96.00" fill="#fcd116"/><text x="945.6" y="830.5" font-size="10" letter-spacing="-0.4" fill="#8893a0" text-anchor="middle" font-family="Liberation Sans">06:00</text><rect x="969.40" y="667.50" width="15.84" height="150.00" fill="#3fbcd8"/><rect x="985.24" y="673.50" width="15.84" height="144.00" fill="#fcd116"/><text x="985.2" y="830.5" font-size="10" letter-spacing="-0.4" fill="#8893a0" text-anchor="middle" font-family="Liberation Sans">07:00</text><rect x="1008.99" y="673.50" width="15.84" height="144.00" fill="#3fbcd8"/><rect x="1024.83" y="673.50" width="15.84" height="144.00" fill="#fcd116"/><text x="1024.8" y="830.5" font-size="10" letter-spacing="-0.4" fill="#8893a0" text-anchor="middle" font-family="Liberation Sans">08:00</text><rect x="1048.58" y="595.50" width="15.84" height="222.00" fill="#3fbcd8"/><rect x="1064.42" y="583.50" width="15.84" height="234.00" fill="#fcd116"/><text x="1064.4" y="830.5" font-size="10" letter-spacing="-0.4" fill="#8893a0" text-anchor="middle" font-family="Liberation Sans">09:00</text><rect x="1088.18" y="559.50" width="15.84" height="258.00" fill="#3fbcd8"/><rect x="1104.01" y="553.50" width="15.84" height="264.00" fill="#fcd116"/><text x="1104.0" y="830.5" font-size="10" letter-spacing="-0.4" fill="#8893a0" text-anchor="middle" font-family="Liberation Sans">10:00</text><rect x="1127.77" y="577.50" width="15.84" height="240.00" fill="#3fbcd8"/><rect x="1143.60" y="577.50" width="15.84" height="240.00" fill="#fcd116"/><text x="1143.6" y="830.5" font-size="10" letter-spacing="-0.4" fill="#8893a0" text-anchor="middle" font-family="Liberation Sans">11:00</text><rect x="1167.36" y="577.50" width="15.84" height="240.00" fill="#3fbcd8"/><rect x="1183.20" y="583.50" width="15.84" height="234.00" fill="#fcd116"/><text x="1183.2" y="830.5" font-size="10" letter-spacing="-0.4" fill="#8893a0" text-anchor="middle" font-family="Liberation Sans">12:00</text><rect x="1206.95" y="589.50" width="15.84" height="228.00" fill="#3fbcd8"/><rect x="1222.79" y="577.50" width="15.84" height="240.00" fill="#fcd116"/><text x="1222.8" y="830.5" font-size="10" letter-spacing="-0.4" fill="#8893a0" text-anchor="middle" font-family="Liberation Sans">13:00</text><rect x="1246.54" y="571.50" width="15.84" height="246.00" fill="#3fbcd8"/><rect x="1262.38" y="577.50" width="15.84" height="240.00" fill="#fcd116"/><text x="1262.4" y="830.5" font-size="10" letter-spacing="-0.4" fill="#8893a0" text-anchor="middle" font-family="Liberation Sans">14:00</text><rect x="1286.13" y="733.50" width="15.84" height="84.00" fill="#3fbcd8"/><rect x="1301.97" y="583.50" width="15.84" height="234.00" fill="#fcd116"/><text x="1302.0" y="830.5" font-size="10" letter-spacing="-0.4" fill="#8893a0" text-anchor="middle" font-family="Liberation Sans">15:00</text><rect x="1341.56" y="565.50" width="15.84" height="252.00" fill="#fcd116"/><text x="1341.6" y="830.5" font-size="10" letter-spacing="-0.4" fill="#8893a0" text-anchor="middle" font-family="Liberation Sans">16:00</text><rect x="1381.15" y="595.50" width="15.84" height="222.00" fill="#fcd116"/><text x="1381.2" y="830.5" font-size="10" letter-spacing="-0.4" fill="#8893a0" text-anchor="middle" font-family="Liberation Sans">17:00</text><rect x="1420.75" y="619.50" width="15.84" height="198.00" fill="#fcd116"/><text x="1420.7" y="830.5" font-size="10" letter-spacing="-0.4" fill="#8893a0" text-anchor="middle" font-family="Liberation Sans">18:00</text><rect x="1460.34" y="673.50" width="15.84" height="144.00" fill="#fcd116"/><text x="1460.3" y="830.5" font-size="10" letter-spacing="-0.4" fill="#8893a0" text-anchor="middle" font-family="Liberation Sans">19:00</text><rect x="1499.93" y="679.50" width="15.84" height="138.00" fill="#fcd116"/><text x="1499.9" y="830.5" font-size="10" letter-spacing="-0.4" fill="#8893a0" text-anchor="middle" font-family="Liberation Sans">20:00</text><rect x="1539.52" y="703.50" width="15.84" height="114.00" fill="#fcd116"/><text x="1539.5" y="830.5" font-size="10" letter-spacing="-0.4" fill="#8893a0" text-anchor="middle" font-family="Liberation Sans">21:00</text><rect x="1579.11" y="715.50" width="15.84" height="102.00" fill="#fcd116"/><text x="1579.1" y="830.5" font-size="10" letter-spacing="-0.4" fill="#8893a0" text-anchor="middle" font-family="Liberation Sans">22:00</text><rect x="1618.70" y="739.50" width="15.84" height="78.00" fill="#fcd116"/><text x="1618.7" y="830.5" font-size="10" letter-spacing="-0.4" fill="#8893a0" text-anchor="middle" font-family="Liberation Sans">23:00</text><line x1="688.8" y1="537.5" x2="688.8" y2="818" stroke="#8c97a3" stroke-width="1"/><line x1="688" y1="817.8" x2="1639" y2="817.8" stroke="#6e7a87" stroke-width="1"/><line x1="688.3" y1="818" x2="688.3" y2="821" stroke="#7a8591" stroke-width="1"/><line x1="727.9" y1="818" x2="727.9" y2="821" stroke="#7a8591" stroke-width="1"/><line x1="767.5" y1="818" x2="767.5" y2="821" stroke="#7a8591" stroke-width="1"/><line x1="807.1" y1="818" x2="807.1" y2="821" stroke="#7a8591" stroke-width="1"/><line x1="846.7" y1="818" x2="846.7" y2="821" stroke="#7a8591" stroke-width="1"/><line x1="886.3" y1="818" x2="886.3" y2="821" stroke="#7a8591" stroke-width="1"/><line x1="925.8" y1="818" x2="925.8" y2="821" stroke="#7a8591" stroke-width="1"/><line x1="965.4" y1="818" x2="965.4" y2="821" stroke="#7a8591" stroke-width="1"/><line x1="1005.0" y1="818" x2="1005.0" y2="821" stroke="#7a8591" stroke-width="1"/><line x1="1044.6" y1="818" x2="1044.6" y2="821" stroke="#7a8591" stroke-width="1"/><line x1="1084.2" y1="818" x2="1084.2" y2="821" stroke="#7a8591" stroke-width="1"/><line x1="1123.8" y1="818" x2="1123.8" y2="821" stroke="#7a8591" stroke-width="1"/><line x1="1163.4" y1="818" x2="1163.4" y2="821" stroke="#7a8591" stroke-width="1"/><line x1="1203.0" y1="818" x2="1203.0" y2="821" stroke="#7a8591" stroke-width="1"/><line x1="1242.6" y1="818" x2="1242.6" y2="821" stroke="#7a8591" stroke-width="1"/><line x1="1282.2" y1="818" x2="1282.2" y2="821" stroke="#7a8591" stroke-width="1"/><line x1="1321.8" y1="818" x2="1321.8" y2="821" stroke="#7a8591" stroke-width="1"/><line x1="1361.4" y1="818" x2="1361.4" y2="821" stroke="#7a8591" stroke-width="1"/><line x1="1401.0" y1="818" x2="1401.0" y2="821" stroke="#7a8591" stroke-width="1"/><line x1="1440.5" y1="818" x2="1440.5" y2="821" stroke="#7a8591" stroke-width="1"/><line x1="1480.1" y1="818" x2="1480.1" y2="821" stroke="#7a8591" stroke-width="1"/><line x1="1519.7" y1="818" x2="1519.7" y2="821" stroke="#7a8591" stroke-width="1"/><line x1="1559.3" y1="818" x2="1559.3" y2="821" stroke="#7a8591" stroke-width="1"/><line x1="1598.9" y1="818" x2="1598.9" y2="821" stroke="#7a8591" stroke-width="1"/><line x1="1638.5" y1="818" x2="1638.5" y2="821" stroke="#7a8591" stroke-width="1"/><rect x="1099" y="852" width="19" height="11" rx="2" fill="#3fbcd8"/><rect x="1148.5" y="852" width="19" height="11" rx="2" fill="#fcd116"/><path d="M1773.50 531.80 A74.00 74.00 0 0 1 1847.22 612.25 L1825.30 610.33 A52.00 52.00 0 0 0 1773.50 553.80 Z" fill="#ee929f"/><path d="M1847.22 612.25 A74.00 74.00 0 1 1 1703.53 581.71 L1724.33 588.87 A52.00 52.00 0 1 0 1825.30 610.33 Z" fill="#89a8f4"/><path d="M1703.53 581.71 A74.00 74.00 0 0 1 1773.50 531.80 L1773.50 553.80 A52.00 52.00 0 0 0 1724.33 588.87 Z" fill="#8dd4c2"/><path d="M1773.50 707.20 A74.20 74.20 0 0 1 1844.57 802.72 L1823.31 796.34 A52.00 52.00 0 0 0 1773.50 729.40 Z" fill="#ee929f"/><path d="M1844.57 802.72 A74.20 74.20 0 1 1 1708.86 744.97 L1728.20 755.87 A52.00 52.00 0 1 0 1823.31 796.34 Z" fill="#89a8f4"/><path d="M1708.86 744.97 A74.20 74.20 0 0 1 1773.50 707.20 L1773.50 729.40 A52.00 52.00 0 0 0 1728.20 755.87 Z" fill="#8dd4c2"/><path d="M393.80 562.80 A131.50 131.50 0 1 1 393.79 562.80 L393.79 607.30 A87.00 87.00 0 1 0 393.80 607.30 Z" fill="#40bcd8"/></svg>
<div class="t" style="left:1121px;top:850px;font-size:10px;color:#8893a0">今日</div>
<div class="t" style="left:1171px;top:850px;font-size:10px;color:#8893a0">昨日</div>
<div class="abs" style="left:625px;top:531px;width:30px;height:24px;background:#6f7df8"></div>
<div class="abs" style="left:625px;top:562px;width:30px;height:24px;background:#363f4a"></div>
<div class="abs" style="left:625px;top:594px;width:30px;height:24px;background:#363f4a"></div>
<div class="t" style="left:625px;top:537px;width:30px;text-align:center;font-size:12px;color:#fff">日</div>
<div class="t" style="left:625px;top:568px;width:30px;text-align:center;font-size:12px;color:#fff">月</div>
<div class="t" style="left:625px;top:600px;width:30px;text-align:center;font-size:12px;color:#fff">年</div>
<div class="t" style="left:1723px;top:598px;width:100px;text-align:center;font-size:13px;color:#8796a6;font-weight:bold">5910</div>
<div class="t" style="left:1723px;top:620px;width:100px;text-align:center;font-size:9.5px;color:#cfd4d9;font-weight:bold">kWh</div>
<div class="t" style="left:1723px;top:773px;width:100px;text-align:center;font-size:13px;color:#8796a6;font-weight:bold">9435</div>
<div class="t" style="left:1723px;top:795px;width:100px;text-align:center;font-size:9.5px;color:#cfd4d9;font-weight:bold">kWh</div>
<div class="t" style="left:1685px;top:547px;width:100px;text-align:center;font-size:9px;color:#fff;font-weight:bold">谷</div>
<div class="t" style="left:1772px;top:557px;width:100px;text-align:center;font-size:9px;color:#fff;font-weight:bold">峰</div>
<div class="t" style="left:1710px;top:664px;width:100px;text-align:center;font-size:9px;color:#fff;font-weight:bold">平</div>
<div class="t" style="left:1690px;top:719px;width:100px;text-align:center;font-size:9px;color:#fff;font-weight:bold">谷</div>
<div class="t" style="left:1776px;top:738px;width:100px;text-align:center;font-size:9px;color:#fff;font-weight:bold">峰</div>
<div class="t" style="left:1697px;top:836px;width:100px;text-align:center;font-size:9px;color:#fff;font-weight:bold">平</div>
<div class="t" style="left:1876px;top:538px;font-size:10px;font-weight:bold;color:#8395a8">今日</div>
<div class="t" style="left:1876px;top:713px;font-size:10px;font-weight:bold;color:#8395a8">昨日</div>
<div class="t" style="left:344px;top:686px;width:100px;text-align:center;font-size:13px;color:#8796a6;font-weight:bold">100%</div>
<div class="t" style="left:344px;top:708px;width:100px;text-align:center;font-size:10px;color:#d6dade;letter-spacing:-0.3px">10kV高压</div>
<div class="t" style="left:186px;top:529px;font-size:10px;color:#d6dade;letter-spacing:-0.3px">10kV高压(5910) / 用电(5910) (kWh)</div>
<div class="abs" style="left:1908px;top:48px;width:9px;height:833px;background:#141b23"></div>
<div class="abs" style="left:1917px;top:48px;width:3px;height:811px;background:#7b91a8"></div>
<div class="abs" style="left:1909px;top:475px;width:9px;height:59px;border:1px solid #8e959c;border-radius:4px;background:#0c1014"></div>
<div class="abs" style="left:1911px;top:496px;width:5px;height:35px;background:repeating-linear-gradient(180deg,#34d35a 0,#34d35a 1px,#0c1014 1px,#0c1014 2px)"></div>
</body></html>
